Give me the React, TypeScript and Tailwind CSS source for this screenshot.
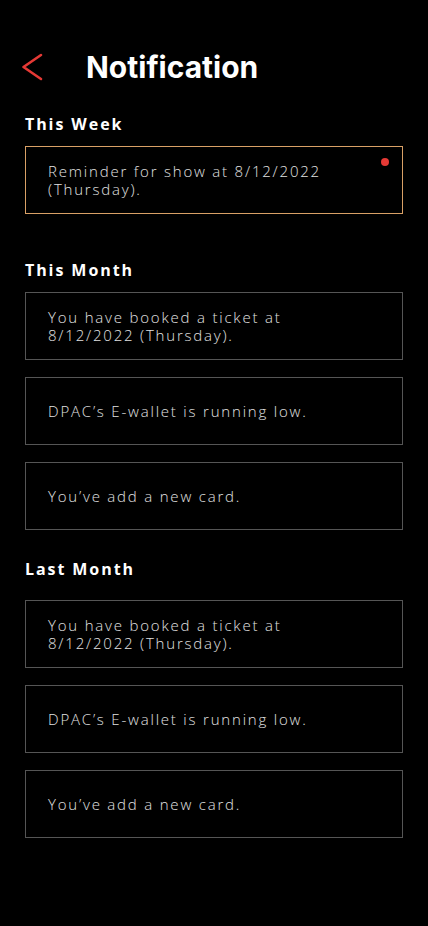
import React from "react";

const Card = ({ text, active }: { text: React.ReactNode; active?: boolean }) => (
  <div
    className={`relative flex h-[68px] items-center border pl-[22px] pr-8 ${
      active ? "border-[#d9a066]" : "border-[#555555]"
    }`}
  >
    <p className="text-[15px] font-light leading-[18px] tracking-[0.12em] text-[#e2e2e2]">{text}</p>
    {active && <span className="absolute right-[13px] top-[11px] h-[8px] w-[8px] rounded-full bg-[#e53935]" />}
  </div>
);

const Heading = ({ children }: { children: React.ReactNode }) => (
  <h2 className="text-[16px] font-bold leading-[20px] tracking-[0.12em] text-white">{children}</h2>
);

export default function App() {
  return (
    <div
      className="min-h-[926px] w-[428px] bg-black text-white"
      style={{ fontFamily: '"Open Sans", "Liberation Sans", sans-serif' }}
    >
      <div className="flex items-center pl-[21px] pt-[52px]">
        <svg width="24" height="28" viewBox="0 0 24 28" fill="none">
          <path d="M20 2 L2.5 14 L20 26" stroke="#e53935" strokeWidth="2.6" strokeLinecap="round" strokeLinejoin="round" />
        </svg>
        <h1
          className="ml-[41px] text-[30px] font-bold leading-[30px] text-white"
          style={{ fontFamily: 'Inter, "Liberation Sans", sans-serif' }}
        >
          Notification
        </h1>
      </div>

      <div className="px-[25px] pt-[32px]">
        <Heading>This Week</Heading>
        <div className="mt-[12px] flex flex-col gap-[17px]">
          <Card active text={<>Reminder for show at 8/12/2022<br />(Thursday).</>} />
        </div>

        <div className="mt-[46px]">
          <Heading>This Month</Heading>
        </div>
        <div className="mt-[12px] flex flex-col gap-[17px]">
          <Card text={<>You have booked a ticket at<br />8/12/2022 (Thursday).</>} />
          <Card text="DPAC’s E-wallet is running low." />
          <Card text="You’ve add a new card." />
        </div>

        <div className="mt-[29px]">
          <Heading>Last Month</Heading>
        </div>
        <div className="mt-[21px] flex flex-col gap-[17px]">
          <Card text={<>You have booked a ticket at<br />8/12/2022 (Thursday).</>} />
          <Card text="DPAC’s E-wallet is running low." />
          <Card text="You’ve add a new card." />
        </div>
      </div>
    </div>
  );
}
